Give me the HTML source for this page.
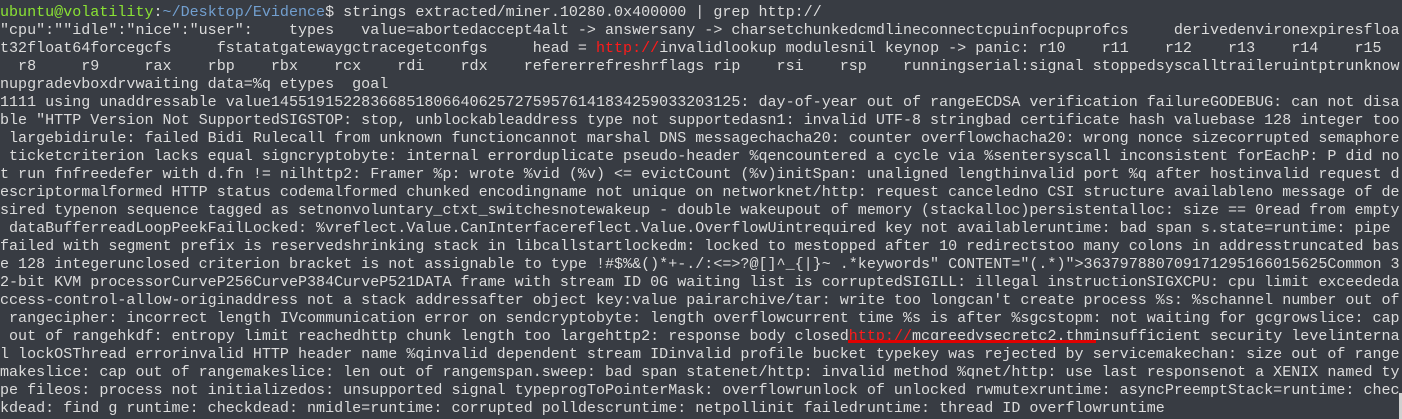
<!DOCTYPE html>
<html><head><meta charset="utf-8"><style>
html,body{margin:0;padding:0;}
body{width:1402px;height:419px;background:#383c43;overflow:hidden;position:relative;}
pre{margin:0;position:absolute;left:0;top:3px;font-family:"Liberation Mono","DejaVu Sans Mono",monospace;font-size:15.05px;line-height:18px;color:#dcdcdc;white-space:pre;}
.g{color:#8ae234}.b{color:#729fcf}.r{color:#ff1a1a}
.ul{position:absolute;left:848px;top:340px;width:248px;height:3px;background:#e00000;}
.sb{position:absolute;left:1399px;top:393px;width:3px;height:26px;background:#cfcfcf;}
</style></head><body>
<pre><span class="g">ubuntu@volatility</span>:<span class="b">~/Desktop/Evidence</span>$ strings extracted/miner.10280.0x400000 | grep http://
"cpu":""idle":"nice":"user":    types   value=abortedaccept4alt -> answersany -> charsetchunkedcmdlineconnectcpuinfocpuprofcs     derivedenvironexpiresfloa
t32float64forcegcfs     fstatatgatewaygctracegetconfgs     head = <span class="r">http://</span>invalidlookup modulesnil keynop -> panic: r10    r11    r12    r13    r14    r15
  r8     r9     rax    rbp    rbx    rcx    rdi    rdx    refererrefreshrflags rip    rsi    rsp    runningserial:signal stoppedsyscalltraileruintptrunknow
nupgradevboxdrvwaiting data=%q etypes  goal
1111 using unaddressable value1455191522836685180664062572759576141834259033203125: day-of-year out of rangeECDSA verification failureGODEBUG: can not disa
ble "HTTP Version Not SupportedSIGSTOP: stop, unblockableaddress type not supportedasn1: invalid UTF-8 stringbad certificate hash valuebase 128 integer too
 largebidirule: failed Bidi Rulecall from unknown functioncannot marshal DNS messagechacha20: counter overflowchacha20: wrong nonce sizecorrupted semaphore
 ticketcriterion lacks equal signcryptobyte: internal errorduplicate pseudo-header %qencountered a cycle via %sentersyscall inconsistent forEachP: P did no
t run fnfreedefer with d.fn != nilhttp2: Framer %p: wrote %vid (%v) &lt;= evictCount (%v)initSpan: unaligned lengthinvalid port %q after hostinvalid request d
escriptormalformed HTTP status codemalformed chunked encodingname not unique on networknet/http: request canceledno CSI structure availableno message of de
sired typenon sequence tagged as setnonvoluntary_ctxt_switchesnotewakeup - double wakeupout of memory (stackalloc)persistentalloc: size == 0read from empty
 dataBufferreadLoopPeekFailLocked: %vreflect.Value.CanInterfacereflect.Value.OverflowUintrequired key not availableruntime: bad span s.state=runtime: pipe
failed with segment prefix is reservedshrinking stack in libcallstartlockedm: locked to mestopped after 10 redirectstoo many colons in addresstruncated bas
e 128 integerunclosed criterion bracket is not assignable to type !#$%&amp;()*+-./:&lt;=&gt;?@[]^_{|}~ .*keywords" CONTENT="(.*)"&gt;363797880709171295166015625Common 3
2-bit KVM processorCurveP256CurveP384CurveP521DATA frame with stream ID 0G waiting list is corruptedSIGILL: illegal instructionSIGXCPU: cpu limit exceededa
ccess-control-allow-originaddress not a stack addressafter object key:value pairarchive/tar: write too longcan't create process %s: %schannel number out of
 rangecipher: incorrect length IVcommunication error on sendcryptobyte: length overflowcurrent time %s is after %sgcstopm: not waiting for gcgrowslice: cap
 out of rangehkdf: entropy limit reachedhttp chunk length too largehttp2: response body closed<span class="r">http://</span>mcgreedysecretc2.thminsufficient security levelinterna
l lockOSThread errorinvalid HTTP header name %qinvalid dependent stream IDinvalid profile bucket typekey was rejected by servicemakechan: size out of range
makeslice: cap out of rangemakeslice: len out of rangemspan.sweep: bad span statenet/http: invalid method %qnet/http: use last responsenot a XENIX named ty
pe fileos: process not initializedos: unsupported signal typeprogToPointerMask: overflowrunlock of unlocked rwmutexruntime: asyncPreemptStack=runtime: chec
kdead: find g runtime: checkdead: nmidle=runtime: corrupted polldescruntime: netpollinit failedruntime: thread ID overflowruntime</pre>
<div class="ul"></div>
<div class="sb"></div>
</body></html>
